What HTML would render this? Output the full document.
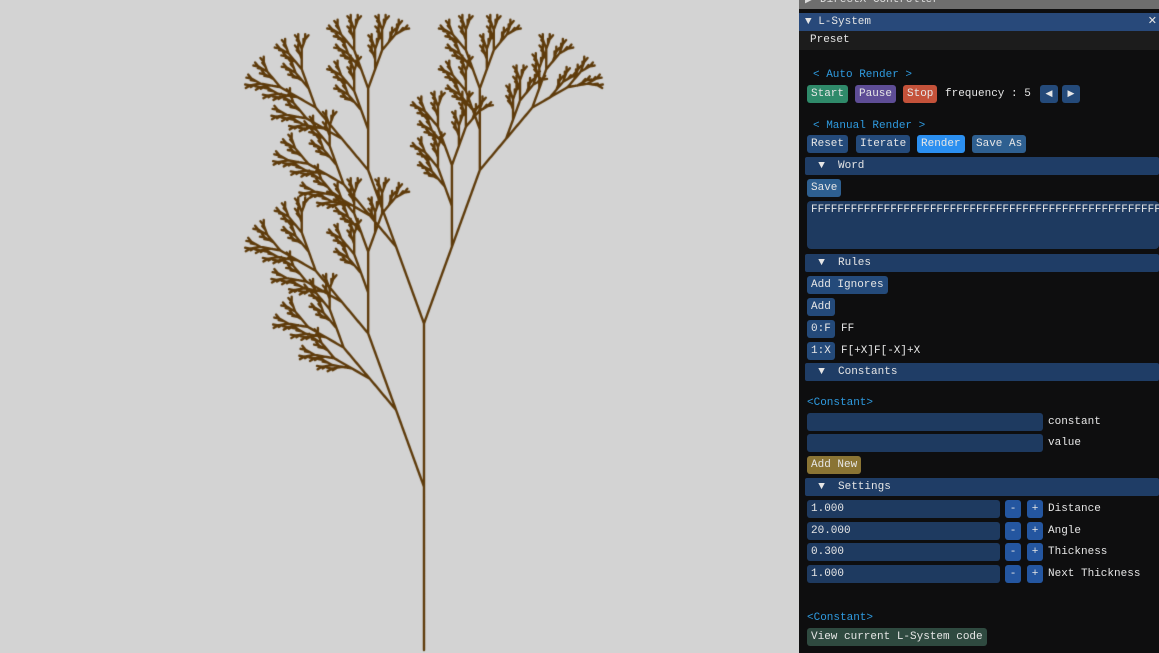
<!DOCTYPE html>
<html><head><meta charset="utf-8"><style>
body{margin:0;width:1159px;height:653px;overflow:hidden;background:#d3d3d3;position:relative;font-family:"Liberation Mono",monospace;font-size:11px;color:#e6e6e6}
#c{position:absolute;left:0;top:0}
.p{position:absolute;left:799px;top:0;width:360px;height:653px;background:#0e0e0f}
.a{position:absolute;white-space:pre;line-height:19px}
.b{position:absolute;height:18px;line-height:19px;border-radius:3px;padding:0 4px;background:#244a7a;white-space:pre}
.h{position:absolute;left:6px;width:354px;height:18px;line-height:19px;background:#1f3d66;border-radius:2px;white-space:pre}
.f{position:absolute;height:18px;line-height:19px;background:#1e3a60;border-radius:3px;padding:0 4px;white-space:pre}
.m{width:10px;padding:0 3px;text-align:center;background:#2456a0}
.t{color:#2f9be0}
</style></head><body>
<canvas id="c" width="799" height="653"></canvas>
<div class="p">
<div class="a" style="left:0;top:-9px;width:360px;height:18px;background:#6e6e6e;color:#ddd;padding-left:6px">▶ DirectX Controller</div>
<div class="a" style="left:0;top:13px;width:360px;background:#28497a;padding-left:6px;box-sizing:border-box">▼ L-System<span style="position:absolute;right:2px">✕</span></div>
<div class="a" style="left:0;top:31px;width:360px;background:#1c1c1c;padding-left:11px;box-sizing:border-box">Preset</div>
<div class="a t" style="left:14px;top:66px">&lt; Auto Render &gt;</div>
<div class="b" style="left:8px;top:85px;background:#2f8a6a">Start</div>
<div class="b" style="left:56px;top:85px;background:#5e4d96">Pause</div>
<div class="b" style="left:104px;top:85px;background:#c4523a">Stop</div>
<div class="a" style="left:146px;top:85px">frequency : 5</div>
<div class="b" style="left:241px;top:85px;width:10px;padding:0 4px;text-align:center;font-size:9px">◀</div>
<div class="b" style="left:263px;top:85px;width:10px;padding:0 4px;text-align:center;font-size:9px">▶</div>
<div class="a t" style="left:14px;top:117px">&lt; Manual Render &gt;</div>
<div class="b" style="left:8px;top:135px">Reset</div>
<div class="b" style="left:57px;top:135px">Iterate</div>
<div class="b" style="left:118px;top:135px;background:#2b8ff0">Render</div>
<div class="b" style="left:173px;top:135px;background:#2e5f90">Save As</div>
<div class="h" style="top:157px">  ▼  Word</div>
<div class="b" style="left:8px;top:179px;background:#2e5f90">Save</div>
<div class="f" style="left:8px;top:201px;width:344px;height:48px;overflow:hidden;border-radius:4px">FFFFFFFFFFFFFFFFFFFFFFFFFFFFFFFFFFFFFFFFFFFFFFFFFFFFFFFFFFFFFFFF</div>
<div class="h" style="top:254px">  ▼  Rules</div>
<div class="b" style="left:8px;top:276px">Add Ignores</div>
<div class="b" style="left:8px;top:298px">Add</div>
<div class="b" style="left:8px;top:320px">0:F</div><div class="a" style="left:42px;top:320px">FF</div>
<div class="b" style="left:8px;top:342px">1:X</div><div class="a" style="left:42px;top:342px">F[+X]F[-X]+X</div>
<div class="h" style="top:363px">  ▼  Constants</div>
<div class="a t" style="left:8px;top:394px">&lt;Constant&gt;</div>
<div class="f" style="left:8px;top:413px;width:228px"></div><div class="a" style="left:249px;top:413px">constant</div>
<div class="f" style="left:8px;top:434px;width:228px"></div><div class="a" style="left:249px;top:434px">value</div>
<div class="b" style="left:8px;top:456px;background:#8a7434">Add New</div>
<div class="h" style="top:478px">  ▼  Settings</div>
<div class="f" style="left:8px;top:500px;width:185px">1.000</div><div class="b m" style="left:206px;top:500px">-</div><div class="b m" style="left:228px;top:500px">+</div><div class="a" style="left:249px;top:500px">Distance</div>
<div class="f" style="left:8px;top:522px;width:185px">20.000</div><div class="b m" style="left:206px;top:522px">-</div><div class="b m" style="left:228px;top:522px">+</div><div class="a" style="left:249px;top:522px">Angle</div>
<div class="f" style="left:8px;top:543px;width:185px">0.300</div><div class="b m" style="left:206px;top:543px">-</div><div class="b m" style="left:228px;top:543px">+</div><div class="a" style="left:249px;top:543px">Thickness</div>
<div class="f" style="left:8px;top:565px;width:185px">1.000</div><div class="b m" style="left:206px;top:565px">-</div><div class="b m" style="left:228px;top:565px">+</div><div class="a" style="left:249px;top:565px">Next Thickness</div>
<div class="a t" style="left:8px;top:609px">&lt;Constant&gt;</div>
<div class="b" style="left:8px;top:628px;background:#2f4a40">View current L-System code</div>
</div>
<script>
var s="X";for(var i=0;i<7;i++){var o="";for(var k=0;k<s.length;k++){var c=s[k];o+=c=="F"?"FF":c=="X"?"F[+X]F[-X]+X":c;}s=o;}
var segs=[],x=0,y=0,a=-Math.PI/2,st=[],d=20*Math.PI/180,miny=0;
for(var k=0;k<s.length;k++){var c=s[k];
if(c=="F"){var nx=x+Math.cos(a),ny=y+Math.sin(a);segs.push([x,y,nx,ny]);x=nx;y=ny;miny=Math.min(miny,y);}
else if(c=="+")a-=d;else if(c=="-")a+=d;else if(c=="[")st.push([x,y,a]);else if(c=="]"){var p=st.pop();x=p[0];y=p[1];a=p[2];}}
var sc=635/(-miny);var g=document.getElementById("c").getContext("2d");
g.strokeStyle="#5e3b0b";g.lineWidth=2.4;g.lineCap="round";g.beginPath();
for(var i=0;i<segs.length;i++){var q=segs[i];g.moveTo(424+q[0]*sc,650+q[1]*sc);g.lineTo(424+q[2]*sc,650+q[3]*sc);}
g.stroke();
</script>
</body></html>
